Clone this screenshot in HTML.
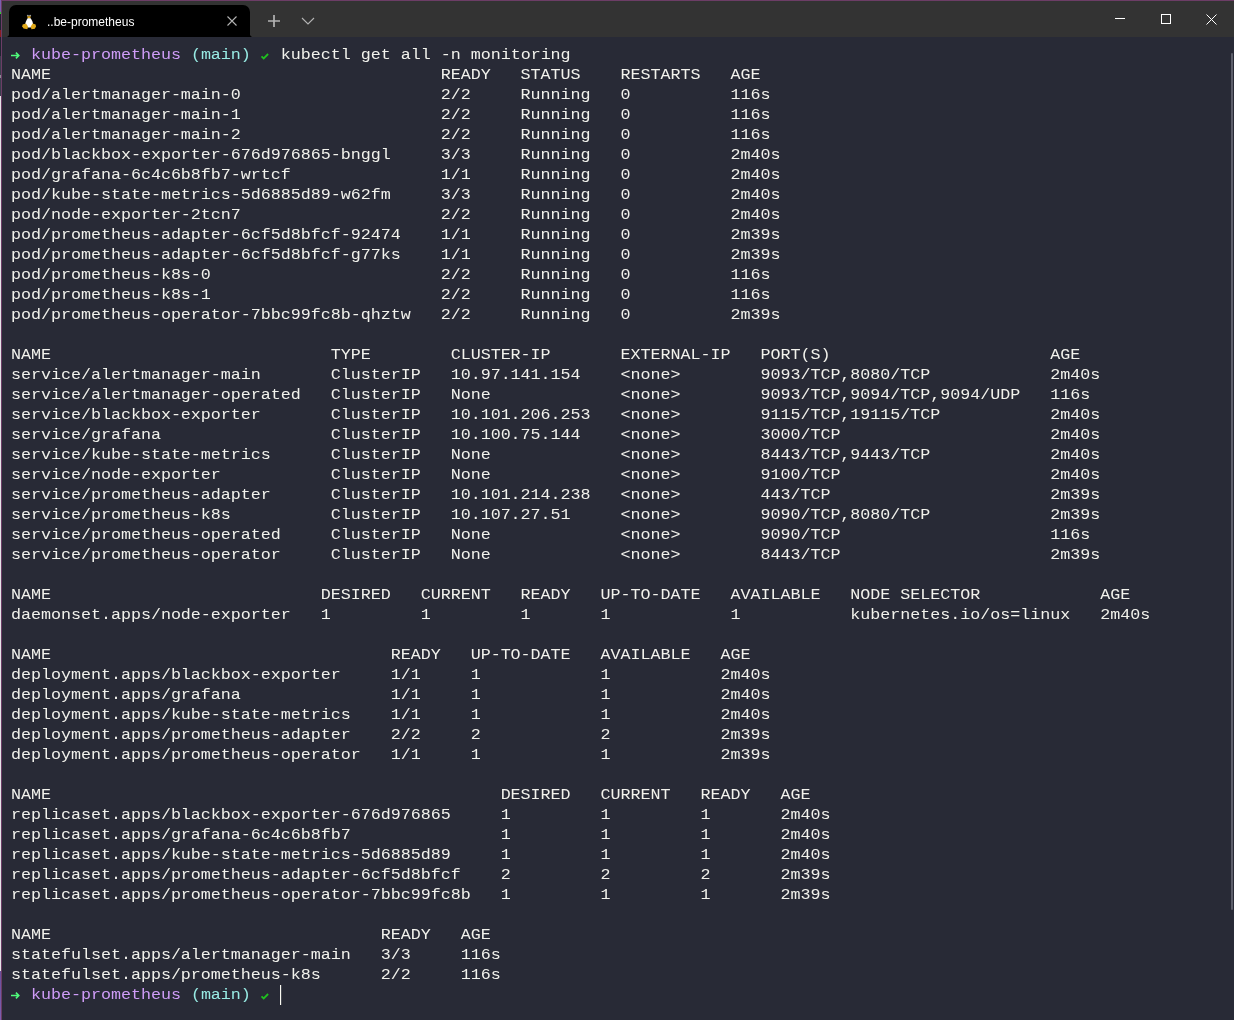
<!DOCTYPE html>
<html><head><meta charset="utf-8">
<style>
html,body{margin:0;padding:0;}
body{width:1234px;height:1020px;overflow:hidden;position:relative;background:#282a36;}
#desk{position:absolute;left:0;top:0;width:1px;height:1020px;background:linear-gradient(#7d60b0 0px,#7d60b0 12px,#33cc33 12px,#33cc33 14px,#1e2430 14px,#1e2430 30px,#8a1c22 30px,#8a1c22 37px,#1e2430 37px,#1e2430 56px,#3a3e4c 56px,#3a3e4c 75px,#8a8c94 75px,#8a8c94 78px,#3a3e4c 78px,#3a3e4c 96px,#e4e4e6 96px,#e4e4e6 971px,#6a4f9a 971px,#7f5fb0 1020px);}
#bl{position:absolute;left:1px;top:0;width:1px;height:1020px;background:#6c3d66;}
#bt{position:absolute;left:1px;top:0;width:1233px;height:1px;background:#6c3d66;}
#tabbar{position:absolute;left:2px;top:1px;width:1232px;height:36px;background:#333333;}
#tab{position:absolute;left:9px;top:5px;width:241px;height:32px;background:#000;border-radius:7px 7px 0 0;}
#tabtitle{position:absolute;left:47px;top:14px;font-family:"Liberation Sans",sans-serif;font-size:12px;color:#fff;line-height:16px;white-space:pre;will-change:transform;}
#term{position:absolute;left:10.6px;top:45px;margin:0;font-family:"Liberation Mono",monospace;font-size:15.2px;letter-spacing:-0.03px;transform:scaleX(1.1);transform-origin:0 0;line-height:20px;color:#f2f2ec;white-space:pre;will-change:transform;}
.g{color:#50fa7b}.p{color:#cf9cf7}.c{color:#98ebe4}
#sb{position:absolute;left:1231px;top:53px;width:2px;height:857px;background:#5c5e6a;border-radius:2px;}
#cursor{position:absolute;left:280px;top:985px;width:1px;height:20px;background:#fafaf2;box-shadow:0.4px 0 0 rgba(250,250,242,0.4);}
svg{position:absolute;}
</style></head><body>
<div id="desk"></div><div id="bl"></div><div id="bt"></div>
<div id="tabbar"></div>
<div id="tab"></div><div style="position:absolute;left:6px;top:34px;width:3px;height:3px;background:radial-gradient(circle at 0 0,#333 2.6px,#000 3.4px)"></div><div style="position:absolute;left:250px;top:34px;width:3px;height:3px;background:radial-gradient(circle at 100% 0,#333 2.6px,#000 3.4px)"></div>
<svg style="left:15px;top:8px" width="30" height="26" viewBox="0 0 30 26">
<ellipse cx="12.9" cy="7.6" rx="1" ry="0.9" fill="#9a9a9a"/><ellipse cx="15.1" cy="7.6" rx="1" ry="0.9" fill="#9a9a9a"/>
<path d="M12.2 8.3H15.8L15.2 10.4H12.8Z" fill="#e0a818"/>
<path d="M12.6 10.3C11.3 12.5 10 15 10.2 17.3L12.8 19.6H15.6L18.1 17C18.2 14.8 17 12.4 15.6 10.3Z" fill="#fff"/>
<path d="M7.6 16.6L11 15.6L13 18.6L12.4 21.2L8.6 20.6L7.2 18.6Z" fill="#e0a818"/>
<path d="M20.6 16.6L17.6 15.6L15.8 18.6L16.4 21.2L19.8 20.8L21 18.6Z" fill="#e0a818"/>
</svg>
<div id="tabtitle">..be-prometheus</div>
<svg style="left:226px;top:15px" width="12" height="12" viewBox="0 0 12 12"><path d="M1.5 1.5L10.5 10.5M10.5 1.5L1.5 10.5" stroke="#b4b4b4" stroke-width="1.1"/></svg>
<svg style="left:267px;top:14px" width="14" height="14" viewBox="0 0 14 14"><path d="M7 1V13M1 7H13" stroke="#b4b4b4" stroke-width="1.7"/></svg>
<svg style="left:301px;top:17px" width="14" height="8" viewBox="0 0 14 8"><path d="M1 1L7 7L13 1" stroke="#b4b4b4" stroke-width="1.1" fill="none"/></svg>
<svg style="left:1114px;top:13px" width="12" height="12" viewBox="0 0 12 12"><path d="M1 5.5H11" stroke="#fff" stroke-width="1"/></svg>
<svg style="left:1161px;top:14px" width="10" height="10" viewBox="0 0 10 10"><rect x="0.5" y="0.5" width="9" height="9" stroke="#fff" stroke-width="1" fill="none"/></svg>
<svg style="left:1206px;top:14px" width="11" height="11" viewBox="0 0 11 11"><path d="M0.5 0.5L10.5 10.5M10.5 0.5L0.5 10.5" stroke="#fff" stroke-width="1"/></svg>
<svg style="left:10px;top:51px" width="12" height="9" viewBox="0 0 12 9"><path d="M1 4.5H8.6M5.9 1.6L8.8 4.5L5.9 7.4" stroke="#50fa7b" stroke-width="1.6" fill="none"/></svg>
<svg style="left:260px;top:52px" width="10" height="8" viewBox="0 0 10 8"><path d="M1.5 4.3L3.7 6.4L8.1 2" stroke="#1fbf1f" stroke-width="1.8" fill="none"/></svg>
<svg style="left:10px;top:991px" width="12" height="9" viewBox="0 0 12 9"><path d="M1 4.5H8.6M5.9 1.6L8.8 4.5L5.9 7.4" stroke="#50fa7b" stroke-width="1.6" fill="none"/></svg>
<svg style="left:260px;top:992px" width="10" height="8" viewBox="0 0 10 8"><path d="M1.5 4.3L3.7 6.4L8.1 2" stroke="#1fbf1f" stroke-width="1.8" fill="none"/></svg>
<pre id="term">  <span class="p">kube-prometheus</span> <span class="c">(main)</span>   kubectl get all -n monitoring
NAME                                       READY   STATUS    RESTARTS   AGE
pod/alertmanager-main-0                    2/2     Running   0          116s
pod/alertmanager-main-1                    2/2     Running   0          116s
pod/alertmanager-main-2                    2/2     Running   0          116s
pod/blackbox-exporter-676d976865-bnggl     3/3     Running   0          2m40s
pod/grafana-6c4c6b8fb7-wrtcf               1/1     Running   0          2m40s
pod/kube-state-metrics-5d6885d89-w62fm     3/3     Running   0          2m40s
pod/node-exporter-2tcn7                    2/2     Running   0          2m40s
pod/prometheus-adapter-6cf5d8bfcf-92474    1/1     Running   0          2m39s
pod/prometheus-adapter-6cf5d8bfcf-g77ks    1/1     Running   0          2m39s
pod/prometheus-k8s-0                       2/2     Running   0          116s
pod/prometheus-k8s-1                       2/2     Running   0          116s
pod/prometheus-operator-7bbc99fc8b-qhztw   2/2     Running   0          2m39s

NAME                            TYPE        CLUSTER-IP       EXTERNAL-IP   PORT(S)                      AGE
service/alertmanager-main       ClusterIP   10.97.141.154    &lt;none&gt;        9093/TCP,8080/TCP            2m40s
service/alertmanager-operated   ClusterIP   None             &lt;none&gt;        9093/TCP,9094/TCP,9094/UDP   116s
service/blackbox-exporter       ClusterIP   10.101.206.253   &lt;none&gt;        9115/TCP,19115/TCP           2m40s
service/grafana                 ClusterIP   10.100.75.144    &lt;none&gt;        3000/TCP                     2m40s
service/kube-state-metrics      ClusterIP   None             &lt;none&gt;        8443/TCP,9443/TCP            2m40s
service/node-exporter           ClusterIP   None             &lt;none&gt;        9100/TCP                     2m40s
service/prometheus-adapter      ClusterIP   10.101.214.238   &lt;none&gt;        443/TCP                      2m39s
service/prometheus-k8s          ClusterIP   10.107.27.51     &lt;none&gt;        9090/TCP,8080/TCP            2m39s
service/prometheus-operated     ClusterIP   None             &lt;none&gt;        9090/TCP                     116s
service/prometheus-operator     ClusterIP   None             &lt;none&gt;        8443/TCP                     2m39s

NAME                           DESIRED   CURRENT   READY   UP-TO-DATE   AVAILABLE   NODE SELECTOR            AGE
daemonset.apps/node-exporter   1         1         1       1            1           kubernetes.io/os=linux   2m40s

NAME                                  READY   UP-TO-DATE   AVAILABLE   AGE
deployment.apps/blackbox-exporter     1/1     1            1           2m40s
deployment.apps/grafana               1/1     1            1           2m40s
deployment.apps/kube-state-metrics    1/1     1            1           2m40s
deployment.apps/prometheus-adapter    2/2     2            2           2m39s
deployment.apps/prometheus-operator   1/1     1            1           2m39s

NAME                                             DESIRED   CURRENT   READY   AGE
replicaset.apps/blackbox-exporter-676d976865     1         1         1       2m40s
replicaset.apps/grafana-6c4c6b8fb7               1         1         1       2m40s
replicaset.apps/kube-state-metrics-5d6885d89     1         1         1       2m40s
replicaset.apps/prometheus-adapter-6cf5d8bfcf    2         2         2       2m39s
replicaset.apps/prometheus-operator-7bbc99fc8b   1         1         1       2m39s

NAME                                 READY   AGE
statefulset.apps/alertmanager-main   3/3     116s
statefulset.apps/prometheus-k8s      2/2     116s
  <span class="p">kube-prometheus</span> <span class="c">(main)</span>   </pre>
<div id="sb"></div>
<div id="cursor"></div>
</body></html>
